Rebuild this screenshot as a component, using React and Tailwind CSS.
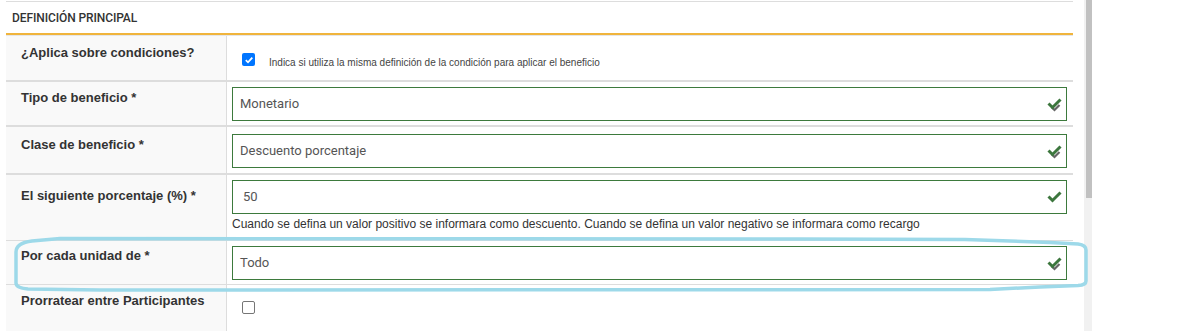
import React from 'react';

// Green validation tick; selects show a grey shadow under it
const ValidTick = ({ shadow = true }) => (
  <svg width="16" height="15" viewBox="0 0 16 15" className="shrink-0">
    {shadow && (
      <path d="M4.5 10 L7.5 13 L12.5 8" fill="none" stroke="#666" strokeWidth="2.2" />
    )}
    <path d="M1.5 6.5 L5.5 10.5 L13.5 2.5" fill="none" stroke="#3c763d" strokeWidth="3" />
  </svg>
);

const CheckedBox = () => (
  <div className="w-[13px] h-[13px] rounded-[2px] bg-[#0075ff] flex items-center justify-center shrink-0">
    <svg width="10" height="10" viewBox="0 0 10 10">
      <path d="M1.8 5.2 L4 7.3 L8.3 2.6" fill="none" stroke="#fff" strokeWidth="1.8" />
    </svg>
  </div>
);

const EmptyBox = () => (
  <div className="w-[13px] h-[13px] rounded-[2px] bg-white border border-[#767676] shrink-0" />
);

const FieldInput = ({ value, pad = 'pl-[7px]', shadow = true }) => (
  <div className={`h-[34px] border border-[#3d7a3d] bg-white flex items-center justify-between ${pad} pr-[3px]`}>
    <span className="text-[13px] text-[#555]">{value}</span>
    <ValidTick shadow={shadow} />
  </div>
);

const Row = ({ label, labelPt, height, border, children }) => (
  <div className={`grid grid-cols-[220px_1px_1fr] ${height} ${border}`}>
    <div className={`bg-[#f9f9f9] pl-[15px] ${labelPt} text-[13px] font-bold text-[#333] leading-[16px] font-['Liberation_Sans',sans-serif]`}>
      {label}
    </div>
    <div className="bg-[#dddddd]" />
    <div className="bg-white pl-[5px] pr-[6px]">{children}</div>
  </div>
);

export default function App() {
  return (
    <div className="relative w-[1179px] h-[331px] overflow-hidden bg-white font-['Roboto',sans-serif]">
      <div className="flex">
        <div className="ml-[6px] w-[1067px]">
          <div className="h-[1px] mt-[1px] bg-[#dddddd]" />
          <div className="h-[31px] flex items-center pl-[6px] text-[12px] font-medium text-[#333] tracking-[-0.1px]">
            DEFINICIÓN PRINCIPAL
          </div>
          <div className="h-[2px] bg-[#f0b43c]" />
          <div className="h-[1px] bg-[#e6e6e6]" />

          <Row label="¿Aplica sobre condiciones?" labelPt="pt-[9px]" height="h-[46px]" border="border-b-2 border-[#dddddd]">
            <div className="flex items-start pl-[10px] pt-[17px] gap-[14px]">
              <CheckedBox />
              <span className="text-[10px] text-[#444] font-['Liberation_Sans',sans-serif] mt-[4px] leading-[12px]">
                Indica si utiliza la misma definición de la condición para aplicar el beneficio
              </span>
            </div>
          </Row>

          <Row label="Tipo de beneficio *" labelPt="pt-[8px]" height="h-[45px]" border="border-b-2 border-[#dddddd]">
            <div className="pt-[5px]">
              <FieldInput value="Monetario" />
            </div>
          </Row>

          <Row label="Clase de beneficio *" labelPt="pt-[10px]" height="h-[48px]" border="border-b-2 border-[#dddddd]">
            <div className="pt-[7px]">
              <FieldInput value="Descuento porcentaje" />
            </div>
          </Row>

          <Row label="El siguiente porcentaje (%) *" labelPt="pt-[13px]" height="h-[66px]" border="border-b border-[#dddddd]">
            <div className="pt-[5px]">
              <FieldInput value="50" pad="pl-[10px]" shadow={false} />
              <div className="mt-[2px] text-[12px] text-[#333] font-['Liberation_Sans',sans-serif] leading-[16px]">
                Cuando se defina un valor positivo se informara como descuento. Cuando se defina un valor negativo se informara como recargo
              </div>
            </div>
          </Row>

          <Row label="Por cada unidad de *" labelPt="pt-[7px]" height="h-[44px]" border="border-b border-[#dddddd]">
            <div className="pt-[5px]">
              <FieldInput value="Todo" />
            </div>
          </Row>

          <Row label="Prorratear entre Participantes" labelPt="pt-[8px]" height="h-[50px]" border="">
            <div className="pl-[10px] pt-[16px]">
              <EmptyBox />
            </div>
          </Row>
        </div>

        {/* scrollbar */}
        <div className="ml-[11px] w-[8px] h-[331px] bg-[#f1f1f1] flex justify-end">
          <div className="w-[6px] h-[198px] bg-[#c1c1c1]" />
        </div>
      </div>

      {/* hand-drawn highlight */}
      <svg className="absolute left-0 top-0 pointer-events-none" width="1179" height="331">
        <path
          d="M16 283 L16 252 Q16 243 32 241 L60 238.5 L800 239 L965 239.5 L1010 241 L1050 242.5 L1078 244 Q1086 245 1086 250 L1086 281 Q1086 285 1078 285.5 L1040 287 L990 289.5 L100 290 L28 289 Q16 288 16 283 Z"
          fill="none"
          stroke="#9dd9e9"
          strokeWidth="3.5"
          strokeLinejoin="round"
        />
      </svg>
    </div>
  );
}
